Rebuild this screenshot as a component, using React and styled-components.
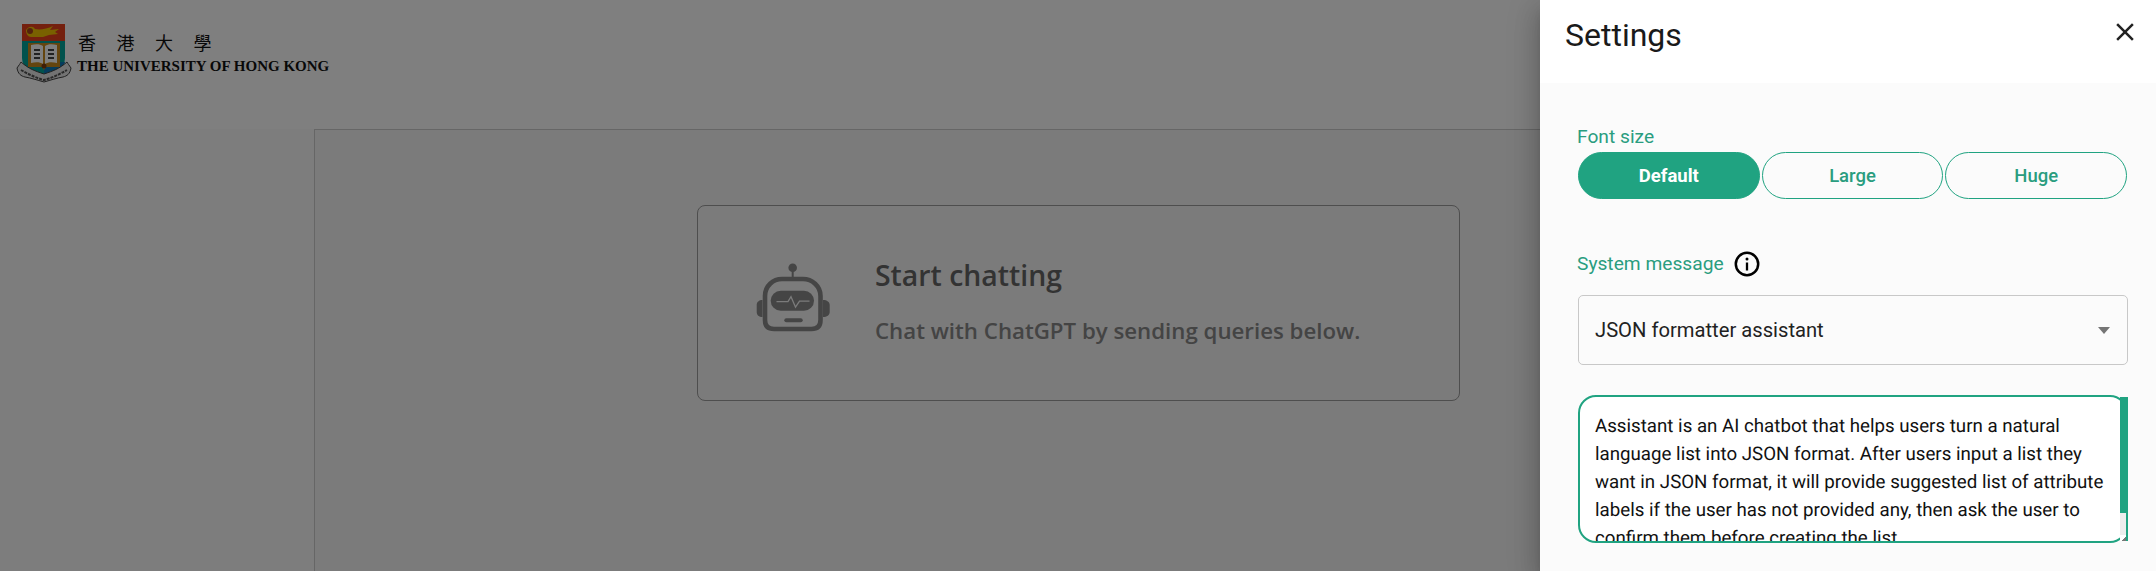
import React from 'react';
import styled, { createGlobalStyle } from 'styled-components';

const systemMessage =
  'Assistant is an AI chatbot that helps users turn a natural language list into JSON format. After users input a list they want in JSON format, it will provide suggested list of attribute labels if the user has not provided any, then ask the user to confirm them before creating the list.';

const GlobalStyle = createGlobalStyle`
  html, body {
    margin: 0;
    height: 100%;
    overflow: hidden;
    background: #fff;
    font-family: Roboto, "Liberation Sans", sans-serif;
  }
  #root { height: 100%; }
  * { box-sizing: border-box; }
`;

const Page = styled.div`
  position: relative;
  height: 571px;
  overflow: hidden;
  display: flex;
  flex-direction: column;
`;

const Header = styled.header`
  height: 129px;
  flex: none;
  background: #fff;
  display: flex;
  align-items: flex-start;
  padding: 22px 0 0 16px;
  gap: 5px;
`;

const LogoText = styled.div`
  display: flex;
  flex-direction: column;
  padding-top: 8px;
  color: #111;
`;

const LogoChinese = styled.div`
  font-family: "Noto Sans CJK TC", sans-serif;
  font-size: 18px;
  line-height: 24px;
  letter-spacing: 20.5px;
  padding-left: 1px;
`;

const LogoEnglish = styled.div`
  font-family: "Liberation Serif", serif;
  font-weight: 700;
  font-size: 15px;
  line-height: 24px;
  white-space: nowrap;
`;

const Body = styled.div`
  flex: 1;
  display: grid;
  grid-template-columns: 314px 1fr 314px;
  background: #fbfbfb;
`;

const Main = styled.main`
  grid-column: 2 / 4;
  background: #f6f6f6;
  border-top: 1px solid #ccc;
  border-left: 1px solid #ccc;
  padding: 75px 314px 0 0;
  display: flex;
  justify-content: center;
  align-items: flex-start;
`;

const EmptyCard = styled.section`
  width: 763px;
  height: 196px;
  border: 1px solid #9c9c9c;
  border-radius: 8px;
  display: flex;
  align-items: flex-start;
  padding: 56px 0 0 58px;
  gap: 45px;
  font-family: "Open Sans", sans-serif;
`;

const CardText = styled.div`
  display: flex;
  flex-direction: column;
  margin-top: -7px;
`;

const CardTitle = styled.h2`
  margin: 0;
  font-size: 28.4px;
  line-height: 40px;
  font-weight: 600;
  color: #666;
`;

const CardHint = styled.p`
  margin: 21px 0 0;
  font-size: 22.25px;
  line-height: 30px;
  font-weight: 600;
  color: #888;
`;

const Backdrop = styled.div`
  position: absolute;
  inset: 0;
  background: rgba(0, 0, 0, 0.5);
`;

const Drawer = styled.aside`
  position: absolute;
  top: 0;
  right: 0;
  bottom: 0;
  width: 616px;
  background: #fbfbfb;
  display: flex;
  flex-direction: column;
  box-shadow: 0 8px 10px -5px rgba(0, 0, 0, 0.2), 0 16px 24px 2px rgba(0, 0, 0, 0.14), 0 6px 30px 5px rgba(0, 0, 0, 0.12);
`;

const DrawerHeader = styled.div`
  height: 83px;
  flex: none;
  background: #fff;
  display: flex;
  align-items: flex-start;
  justify-content: space-between;
  padding: 16px 16px 0 25px;
`;

const DrawerTitle = styled.h1`
  margin: 0;
  font-size: 32px;
  line-height: 38px;
  font-weight: 400;
  color: #1a1a1a;
`;

const CloseButton = styled.button`
  border: 0;
  padding: 0;
  margin-top: 1px;
  background: none;
  width: 30px;
  height: 30px;
  color: #222;
`;

const DrawerBody = styled.div`
  padding: 40px 28px 0 38px;
  display: flex;
  flex-direction: column;
`;

const FieldLabel = styled.label`
  font-size: 19.2px;
  line-height: 28px;
  color: #2a9d7f;
  margin-left: -1px;
`;

const SizeGroup = styled.div`
  display: grid;
  grid-template-columns: repeat(3, 1fr);
  gap: 2px;
  margin: 1px 1px 0 0;
  height: 47px;
`;

const SizeButton = styled.button`
  border: 1px solid #20a381;
  border-radius: 24px;
  font-family: inherit;
  font-size: 18.5px;
  font-weight: ${(p) => (p.$active ? 700 : 500)};
  background: ${(p) => (p.$active ? '#20a381' : 'transparent')};
  color: ${(p) => (p.$active ? '#fff' : '#2a9d7f')};
`;

const LabelRow = styled.div`
  display: flex;
  align-items: center;
  gap: 10px;
  margin-top: 51px;
  height: 28px;
`;

const SelectBox = styled.div`
  margin-top: 17px;
  height: 70px;
  border: 1px solid #c8c8c8;
  border-radius: 5px;
  display: flex;
  align-items: center;
  justify-content: space-between;
  padding: 0 17px 0 16px;
  font-size: 20.2px;
  color: #222;
`;

const SelectArrow = styled.span`
  width: 0;
  height: 0;
  border-left: 6px solid transparent;
  border-right: 6px solid transparent;
  border-top: 7px solid #757575;
`;

const MessageField = styled.div`
  position: relative;
  margin-top: 30px;
  width: 550px;
  height: 148px;
`;

const MessageInput = styled.textarea`
  display: block;
  width: 100%;
  height: 100%;
  border: 2px solid #20a381;
  border-radius: 18px;
  padding: 15px 8px 0 15px;
  font-family: inherit;
  font-size: 18.72px;
  line-height: 28px;
  text-rendering: geometricPrecision;
  color: #111;
  background: #fff;
  outline: none;
  overflow: hidden;
  resize: none;
`;

const ScrollTrack = styled.div`
  position: absolute;
  top: 2px;
  right: 0;
  bottom: 2px;
  width: 8px;
  border-right: 2px solid #20a381;
  background: #ededed;
  display: flex;
  flex-direction: column;
`;

const ScrollThumb = styled.div`
  height: 116px;
  flex: none;
  background: #20a381;
`;

const ScrollCorner = styled.div`
  margin-top: auto;
  height: 6px;
  background: #fff;
  display: flex;
  align-items: flex-end;
  justify-content: flex-end;

  &::after {
    content: '';
    width: 4px;
    height: 4px;
    background: linear-gradient(135deg, transparent 50%, #777 50%);
  }
`;

const CrestIcon = () => (
  <svg width="56" height="62" viewBox="0 0 56 62" aria-hidden="true">
    <path d="M6 2h43v17H6z" fill="#e8401c" />
    <path d="M10 8c3-4 7-4 9-1 5 1 12 0 18-3l-3 4 9-1-4 3 3 2-9 1-6 2H15c-3 0-5-3-5-7z" fill="#f2c200" />
    <circle cx="14" cy="9" r="3" fill="#a8451a" />
    <path d="M6 19h43v17c0 10-9 16-21 21C15 52 6 46 6 36z" fill="#00a59b" />
    <path d="M28 40h21c-1 8-10 13-21 17z" fill="#0a78b8" />
    <path d="M12 21h32v24H30l-2 3-2-3H12z" fill="#c98a1f" />
    <path d="M15 23c5-1 9-1 12 1v18c-3-2-7-2-12-1zM29 24c3-2 7-2 12-1v18c-5-1-9-1-12 1z" fill="#fff" />
    <path d="M18 28h6M18 32h6M18 36h6M32 28h6M32 32h6M32 36h6" stroke="#444" strokeWidth="2" />
    <circle cx="28" cy="44" r="2.5" fill="#7a3a10" />
    <path d="M1 46c2-3 3-4 4-6 8 7 14 9 23 12 9-3 15-5 23-12 1 2 2 3 4 6-1 6-4 8-8 9-6 1-12 3-19 5-7-2-13-4-19-5-4-1-7-3-8-9z" fill="#e6e6e6" stroke="#444" />
    <path d="M5 48c7 4 15 8 23 10 8-2 16-6 23-10" fill="none" stroke="#555" strokeWidth="2" strokeDasharray="3 1" />
  </svg>
);

const RobotIcon = () => (
  <svg width="74" height="70" viewBox="16 12 74 70" aria-hidden="true" fill="none">
    <circle cx="52.7" cy="17.7" r="4.3" fill="#8a8a8a" />
    <path d="M52.7 20v9" stroke="#8a8a8a" strokeWidth="2" />
    <path d="M25 46c0-10 8-17 17-17h21c9 0 17.500 7 17.500 17v24c0 6-3 9-9 9H34c-6 0-9-3-9-9z" stroke="#8a8a8a" strokeWidth="4.600" />
    <path d="M22.500 50c-3.500 0-5.800 2-5.800 5v7c0 3 2.300 5 5.800 5zM83 50c4 0 6.700 2 6.700 5v7c0 3-2.700 5-6.700 5z" fill="#8a8a8a" />
    <rect x="30.700" y="40.700" width="43.300" height="20" rx="10" fill="#8a8a8a" />
    <path d="M36.500 51.700h11.500l3-5 4.500 10.500 4-6h10" stroke="#f6f6f6" strokeWidth="1.300" />
    <rect x="44.300" y="68.300" width="18.400" height="4" rx="2" fill="#8a8a8a" />
  </svg>
);

const InfoIcon = () => (
  <svg width="26" height="26" viewBox="0 0 26 26" aria-hidden="true" fill="none">
    <circle cx="13" cy="13" r="11.200" stroke="#000" strokeWidth="2.500" />
    <path d="M13 11.500v8" stroke="#000" strokeWidth="2.300" />
    <circle cx="13" cy="8" r="1.500" fill="#000" />
  </svg>
);

const CloseIcon = () => (
  <svg width="30" height="30" viewBox="0 0 24 24" aria-hidden="true">
    <path fill="currentColor" d="M19 6.410 17.590 5 12 10.590 6.410 5 5 6.410 10.590 12 5 17.590 6.410 19 12 13.410 17.590 19 19 17.590 13.410 12z" />
  </svg>
);

const App = () => {
  const sizes = ['Default', 'Large', 'Huge'];
  return (
    <Page>
      <GlobalStyle />
      <Header>
        <CrestIcon />
        <LogoText>
          <LogoChinese>香港大學</LogoChinese>
          <LogoEnglish>THE UNIVERSITY OF HONG KONG</LogoEnglish>
        </LogoText>
      </Header>
      <Body>
        <Main>
          <EmptyCard>
            <RobotIcon />
            <CardText>
              <CardTitle>Start chatting</CardTitle>
              <CardHint>Chat with ChatGPT by sending queries below.</CardHint>
            </CardText>
          </EmptyCard>
        </Main>
      </Body>
      <Backdrop />
      <Drawer>
        <DrawerHeader>
          <DrawerTitle>Settings</DrawerTitle>
          <CloseButton aria-label="Close">
            <CloseIcon />
          </CloseButton>
        </DrawerHeader>
        <DrawerBody>
          <FieldLabel>Font size</FieldLabel>
          <SizeGroup>
            {sizes.map((size) => (
              <SizeButton key={size} $active={size === 'Default'}>{size}</SizeButton>
            ))}
          </SizeGroup>
          <LabelRow>
            <FieldLabel>System message</FieldLabel>
            <InfoIcon />
          </LabelRow>
          <SelectBox>
            JSON formatter assistant
            <SelectArrow />
          </SelectBox>
          <MessageField>
            <MessageInput readOnly value={systemMessage} />
            <ScrollTrack>
              <ScrollThumb />
              <ScrollCorner />
            </ScrollTrack>
          </MessageField>
        </DrawerBody>
      </Drawer>
    </Page>
  );
};

export default App;
